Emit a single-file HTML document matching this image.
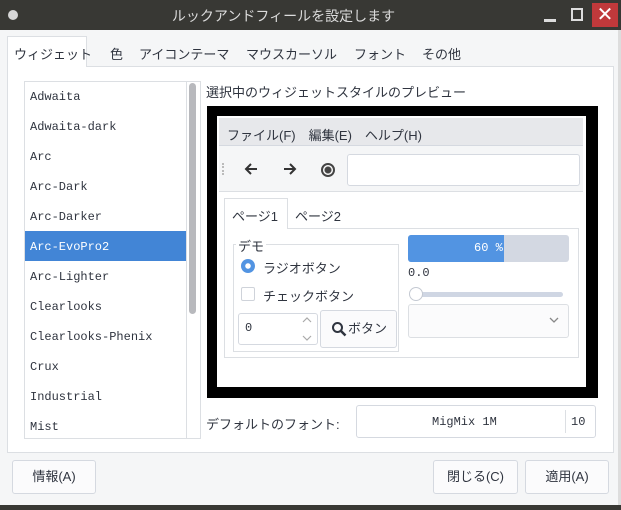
<!DOCTYPE html><html><head><meta charset="utf-8"><style>
*{box-sizing:border-box;margin:0;padding:0}
body{width:621px;height:510px;background:#f5f6f7;font-family:"Liberation Sans","Noto Sans CJK JP",sans-serif;font-size:13px;color:#2f343f;position:relative;overflow:hidden}
.a{position:absolute}
.mono{font-family:"Liberation Mono","Noto Sans CJK JP",monospace;font-size:12px}
.btn{position:absolute;background:#fbfbfc;border:1px solid #d5d9e0;border-radius:3px;text-align:center;font-size:13px}
</style></head><body>
<div class="a" style="left:0;top:0;width:621px;height:30px;background:#383834"></div>
<div class="a" style="left:8px;top:10px;width:10px;height:10px;border-radius:50%;background:#d6d6d6"></div>
<div class="a" style="left:0;top:6px;width:567px;text-align:center;color:#dcdcdc;font-size:14px">ルックアンドフィールを設定します</div>
<div class="a" style="left:544px;top:19px;width:12px;height:3px;background:#ddd"></div>
<div class="a" style="left:571px;top:8px;width:12px;height:13px;border:2px solid #ddd"></div>
<div class="a" style="left:592px;top:3px;width:26px;height:24px;background:#c0393b;color:#fff;font-size:20px;text-align:center;line-height:24px">✕</div>
<div class="a" style="left:618px;top:30px;width:3px;height:480px;background:#ddd"></div>
<!-- tabs -->
<div class="a" style="left:7px;top:66px;width:607px;height:387px;background:#fff;border:1px solid #dcdfe3"></div>
<div class="a" style="left:7px;top:36px;width:80px;height:31px;background:#fff;border:1px solid #dcdfe3;border-bottom:none"></div>
<div class="a" style="left:14px;top:44px">ウィジェット</div>
<div class="a" style="left:110px;top:44px">色</div>
<div class="a" style="left:139px;top:44px">アイコンテーマ</div>
<div class="a" style="left:246px;top:44px">マウスカーソル</div>
<div class="a" style="left:354px;top:44px">フォント</div>
<div class="a" style="left:422px;top:44px">その他</div>
<!-- list -->
<div class="a" style="left:24px;top:81px;width:177px;height:358px;border:1px solid #dcdfe3;background:#fff"></div>
<div class="a" style="left:186px;top:81px;width:1px;height:358px;background:#dcdfe3"></div>
<div class="a" style="left:189px;top:83px;width:7px;height:231px;background:#b8b9bd;border-radius:4px"></div>
<div class="a" style="left:25px;top:231px;width:161px;height:30px;background:#4285d6"></div>
<div class="a mono" style="left:30px;top:82px;line-height:30px">Adwaita<br>Adwaita-dark<br>Arc<br>Arc-Dark<br>Arc-Darker<br><span style="color:#fff">Arc-EvoPro2</span><br>Arc-Lighter<br>Clearlooks<br>Clearlooks-Phenix<br>Crux<br>Industrial<br>Mist</div>
<!-- preview -->
<div class="a" style="left:206px;top:82px">選択中のウィジェットスタイルのプレビュー</div>
<div class="a" style="left:207px;top:106px;width:391px;height:292px;background:#000"></div>
<div class="a" style="left:217px;top:116px;width:369px;height:271px;background:#fff"></div>
<div class="a" style="left:219px;top:118px;width:364px;height:28px;background:#e7e8eb;border-bottom:1px solid #d5d9e0"></div>
<div class="a" style="left:227px;top:125px">ファイル(F)　編集(E)　ヘルプ(H)</div>
<div class="a" style="left:219px;top:146px;width:364px;height:46px;background:#f5f6f7;border-bottom:1px solid #dcdfe3"></div>
<div class="a" style="left:222px;top:163px;width:2px;height:12px;border-left:2px dotted #bbb"></div>
<svg class="a" style="left:244px;top:162px" width="14" height="14"><path d="M13 7H2M7 2L2 7l5 5" stroke="#333" stroke-width="2" fill="none"/></svg>
<svg class="a" style="left:283px;top:162px" width="14" height="14"><path d="M1 7h11M7 2l5 5-5 5" stroke="#333" stroke-width="2" fill="none"/></svg>
<div class="a" style="left:321px;top:163px;width:14px;height:14px;border-radius:50%;border:2px solid #444;background:radial-gradient(#444 3px,#fff 4px)"></div>
<div class="a" style="left:347px;top:154px;width:233px;height:32px;background:#fff;border:1px solid #d5d9e0;border-radius:3px"></div>
<div class="a" style="left:224px;top:228px;width:355px;height:130px;border:1px solid #dcdfe3"></div>
<div class="a" style="left:224px;top:198px;width:64px;height:31px;background:#fff;border:1px solid #dcdfe3;border-bottom:none"></div>
<div class="a" style="left:232px;top:206px">ページ1</div>
<div class="a" style="left:295px;top:206px">ページ2</div>
<div class="a" style="left:233px;top:244px;width:166px;height:108px;border:1px solid #dcdfe3"></div>
<div class="a" style="left:236px;top:236px;background:#fff;padding:0 2px">デモ</div>
<div class="a" style="left:241px;top:259px;width:14px;height:14px;border-radius:50%;background:radial-gradient(#fff 2.5px,#5294e2 3px)"></div>
<div class="a" style="left:263px;top:258px">ラジオボタン</div>
<div class="a" style="left:241px;top:287px;width:14px;height:14px;border:1px solid #cfd3da;border-radius:2px"></div>
<div class="a" style="left:263px;top:286px">チェックボタン</div>
<div class="a" style="left:238px;top:313px;width:80px;height:32px;border:1px solid #d5d9e0;border-radius:3px"></div>
<div class="a mono" style="left:245px;top:321px">0</div>
<svg class="a" style="left:302px;top:316px" width="10" height="26"><path d="M1 6l4-4 4 4M1 20l4 4 4-4" stroke="#aaa" stroke-width="1.2" fill="none"/></svg>
<div class="a btn" style="left:320px;top:310px;width:77px;height:38px;line-height:36px;padding-left:18px">ボタン</div>
<svg class="a" style="left:331px;top:321px" width="16" height="16"><circle cx="6.5" cy="6.5" r="4.5" stroke="#2f343f" stroke-width="2" fill="none"/><path d="M10 10l4.5 4.5" stroke="#2f343f" stroke-width="2.5"/></svg>
<div class="a" style="left:408px;top:235px;width:161px;height:27px;background:#d3d8e2;border-radius:3px"></div>
<div class="a" style="left:408px;top:235px;width:96px;height:27px;background:#5294e2;border-radius:3px 0 0 3px"></div>
<div class="a mono" style="left:474px;top:241px;color:#fff">60 %</div>
<div class="a mono" style="left:408px;top:266px">0.0</div>
<div class="a" style="left:410px;top:292px;width:153px;height:5px;background:#cfd6e3;border-radius:3px"></div>
<div class="a" style="left:409px;top:287px;width:14px;height:14px;border-radius:50%;background:#fff;border:1px solid #c4c9d2"></div>
<div class="a" style="left:408px;top:304px;width:161px;height:34px;border:1px solid #dcdfe3;border-radius:3px;background:#fbfbfc"></div>
<svg class="a" style="left:549px;top:317px" width="10" height="7"><path d="M1 1l4 4 4-4" stroke="#888" stroke-width="1.3" fill="none"/></svg>
<!-- font -->
<div class="a" style="left:206px;top:414px">デフォルトのフォント:</div>
<div class="a" style="left:356px;top:405px;width:240px;height:33px;background:#fff;border:1px solid #d5d9e0;border-radius:3px"></div>
<div class="a mono" style="left:432px;top:415px">MigMix 1M</div>
<div class="a" style="left:565px;top:410px;width:1px;height:23px;background:#dcdfe3"></div>
<div class="a mono" style="left:571px;top:415px">10</div>
<!-- buttons -->
<div class="btn" style="left:12px;top:460px;width:84px;height:34px;line-height:32px">情報(A)</div>
<div class="btn" style="left:433px;top:460px;width:85px;height:34px;line-height:32px">閉じる(C)</div>
<div class="btn" style="left:525px;top:460px;width:84px;height:34px;line-height:32px">適用(A)</div>
<div class="a" style="left:0;top:505px;width:621px;height:5px;background:#383834"></div>
</body></html>
